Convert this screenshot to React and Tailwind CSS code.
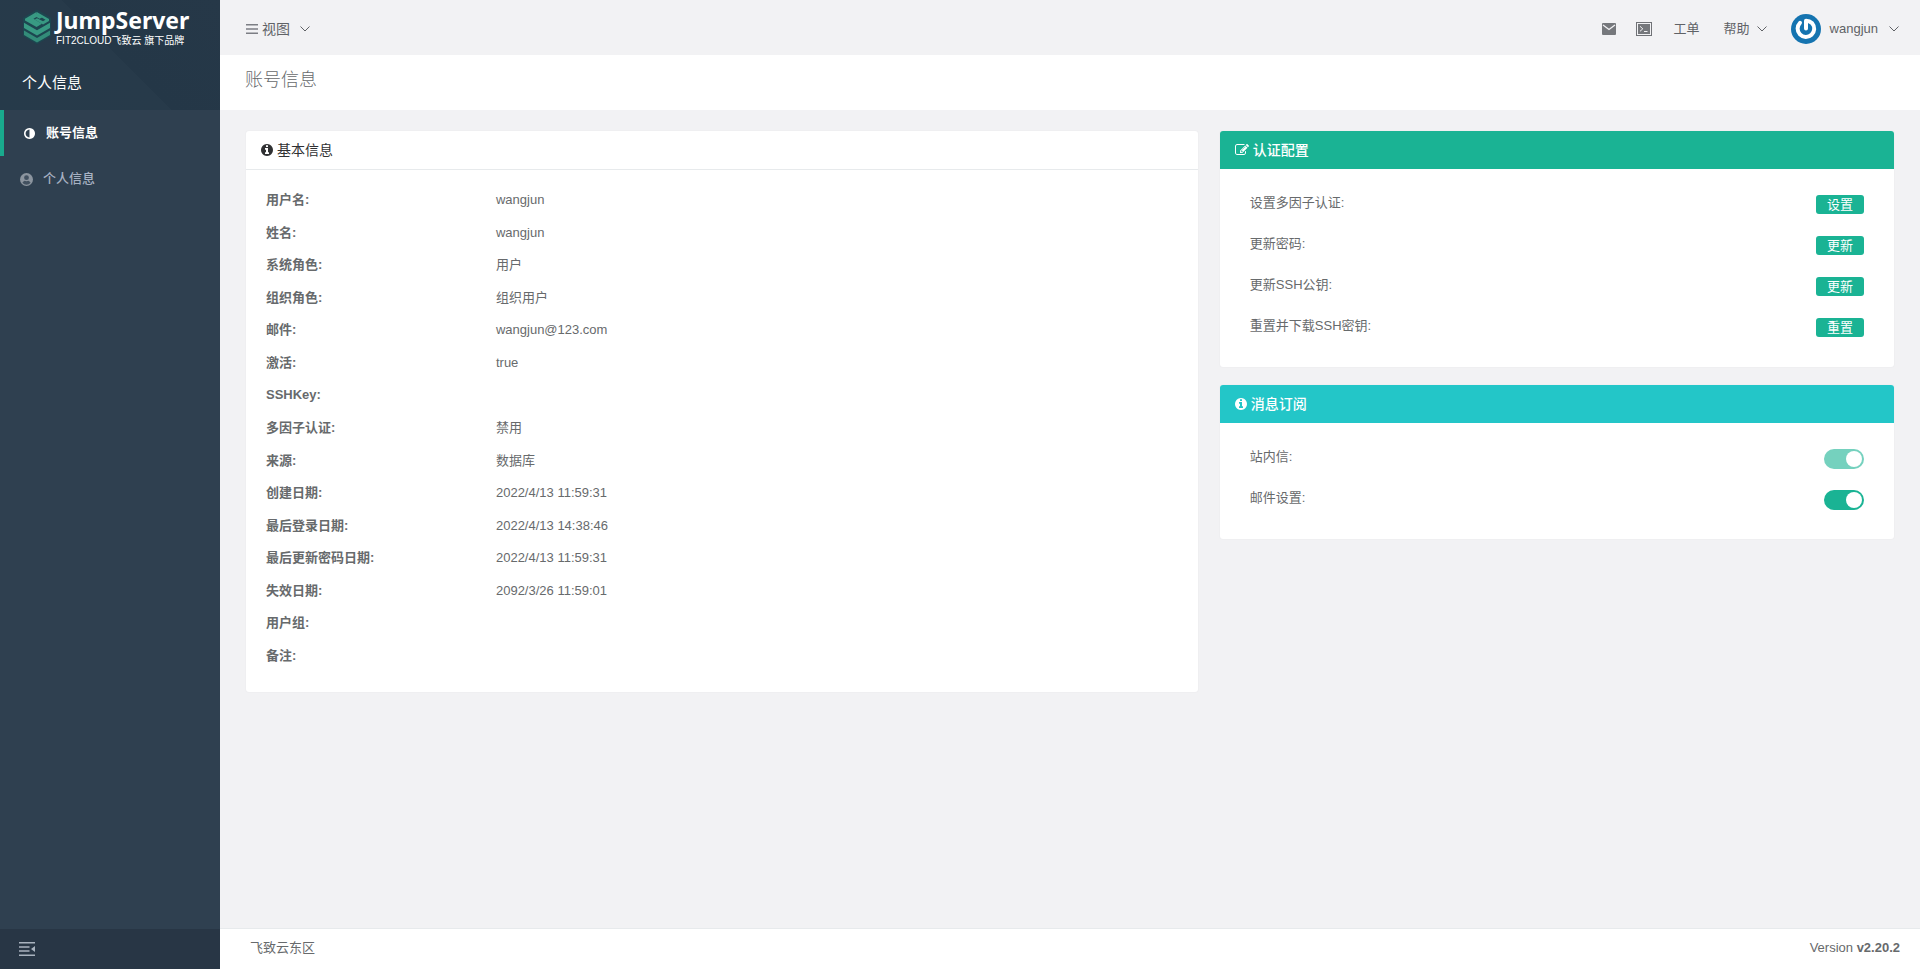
import React from "react";

const details = [
  ["用户名:", "wangjun"],
  ["姓名:", "wangjun"],
  ["系统角色:", "用户"],
  ["组织角色:", "组织用户"],
  ["邮件:", "wangjun@123.com"],
  ["激活:", "true"],
  ["SSHKey:", ""],
  ["多因子认证:", "禁用"],
  ["来源:", "数据库"],
  ["创建日期:", "2022/4/13 11:59:31"],
  ["最后登录日期:", "2022/4/13 14:38:46"],
  ["最后更新密码日期:", "2022/4/13 11:59:31"],
  ["失效日期:", "2092/3/26 11:59:01"],
  ["用户组:", ""],
  ["备注:", ""],
];

const authActions = [
  ["设置多因子认证:", "设置"],
  ["更新密码:", "更新"],
  ["更新SSH公钥:", "更新"],
  ["重置并下载SSH密钥:", "重置"],
];

const INFO =
  "M1152 1376v-160q0-14-9-23t-23-9h-96v-512q0-14-9-23t-23-9h-320q-14 0-23 9t-9 23v160q0 14 9 23t23 9h96v320h-96q-14 0-23 9t-9 23v160q0 14 9 23t23 9h448q14 0 23-9t9-23zm-128-896v-160q0-14-9-23t-23-9h-192q-14 0-23 9t-9 23v160q0 14 9 23t23 9h192q14 0 23-9t9-23zm640 416q0 209-103 385.5t-279.5 279.5-385.5 103-385.5-103-279.5-279.5-103-385.5 103-385.5 279.5-279.5 385.5-103 385.5 103 279.5 279.5 103 385.5z";
const ADJUST =
  "M896 1440v-1088q-148 0-273 73t-198 198-73 273 73 273 198 198 273 73zm768-544q0 209-103 385.5t-279.5 279.5-385.5 103-385.5-103-279.5-279.5-103-385.5 103-385.5 279.5-279.5 385.5-103 385.5 103 279.5 279.5 103 385.5z";
const EDIT =
  "M888 1184l116-116-152-152-116 116v56h96v96h56zm440-720q-16-16-33 1l-350 350q-17 17-1 33t33-1l350-350q17-17 1-33zm80 594v190q0 119-84.5 203.5t-203.5 84.5h-832q-119 0-203.5-84.5t-84.5-203.5v-832q0-119 84.5-203.5t203.5-84.5h832q63 0 117 25 15 7 18 23 3 17-9 29l-49 49q-14 14-32 8-23-6-45-6h-832q-66 0-113 47t-47 113v832q0 66 47 113t113 47h832q66 0 113-47t47-113v-126q0-13 9-22l64-64q15-15 35-7t20 29zm-96-738l288 288-672 672h-288v-288zm444 132l-92 92-288-288 92-92q28-28 68-28t68 28l152 152q28 28 28 68t-28 68z";

function Glyph({ d, viewBox = "128 128 1536 1536", className }) {
  return (
    <svg viewBox={viewBox} fill="currentColor" className={className} aria-hidden="true">
      <path d={d} />
    </svg>
  );
}

function Chevron() {
  return (
    <svg viewBox="0 0 10 6" fill="none" stroke="currentColor" className="h-[6px] w-[10px]" aria-hidden="true">
      <path d="M0.5 0.5 5 5 9.5 0.5" />
    </svg>
  );
}

function LogoMark() {
  return (
    <svg viewBox="0 0 30 36" className="h-9 w-[30px]" aria-hidden="true">
      <path d="M15 0.5 29 8.8V27L15 35.3 1 27V8.8Z" fill="#1d4650" />
      <path d="M14.5 3 3 9.8V11.5L14.5 18 20 14.8 11.5 9.8 14.5 8 17.5 9.8 20.5 8.2 14.8 4.8Z" fill="#389a83" />
      <path d="M14.8 3 27 10V12L21 15.4 12.8 10.4 15 9.2 21 12.2 23.5 10.8 14.8 5.6Z" fill="#389a83" />
      <path d="M2 13.8 15 21.3 28 13.8V19L15 26.5 2 19Z" fill="#389a83" />
      <path d="M2 21.6 15 29.1 28 21.6V26L15 33.5 2 26Z" fill="#338c79" />
    </svg>
  );
}

function Avatar() {
  return (
    <svg viewBox="0 0 30 30" className="size-[30px]" aria-hidden="true">
      <circle cx="15" cy="15" r="15" fill="#1574b0" />
      <path
        d="M9 8.8A8.3 8.3 0 1 0 21.2 9.2Q18.6 6.7 15 6.7V14.6"
        fill="none"
        stroke="#fff"
        strokeWidth="4"
        strokeLinecap="round"
        strokeLinejoin="round"
      />
    </svg>
  );
}

function Sidebar() {
  return (
    <aside className="flex w-[220px] shrink-0 flex-col bg-[#2f4050]">
      <div className="h-[110px] bg-[linear-gradient(45deg,#263a4a_0%,#273a4a_52%,#243747_52%,#263848_100%)] text-white">
        <a href="#home" className="flex h-[55px] items-start gap-1 pt-[9px] pl-[22px]">
          <LogoMark />
          <span className="flex flex-col gap-[2px]">
            <span className="font-['Noto_Sans'] text-[23px] leading-[22px] font-bold">JumpServer</span>
            <span className="text-[10px] leading-[16px] whitespace-nowrap">FIT2CLOUD飞致云 旗下品牌</span>
          </span>
        </a>
        <h2 className="flex h-[55px] items-center pl-[22px] text-[15px]">个人信息</h2>
      </div>
      <nav className="flex flex-col">
        <a href="#account" className="flex h-[46px] items-center gap-[11px] border-l-4 border-[#19aa8d] pl-5 font-bold text-white">
          <Glyph d={ADJUST} className="size-[11px]" />
          账号信息
        </a>
        <a href="#profile" className="flex h-[46px] items-center gap-[10px] pl-5 font-medium text-[#a7b1c2]">
          <svg viewBox="0 0 14 14" className="size-[13px]" aria-hidden="true">
            <circle cx="7" cy="7" r="7" fill="#8c959f" />
            <path d="M7 2.4A2.6 2.6 0 1 1 7 7.6 2.6 2.6 0 0 1 7 2.4ZM2.6 10.4Q3.6 8.8 5 8.4 7 9.4 9 8.4 10.4 8.8 11.4 10.4 9.6 12.6 7 12.6 4.4 12.6 2.6 10.4Z" fill="#2f4050" opacity="0.8" />
          </svg>
          个人信息
        </a>
      </nav>
      <div className="mt-auto flex h-10 items-center bg-[#283645] pl-[19px] text-[#a9b3bf]">
        <button type="button" aria-label="Collapse menu" className="cursor-pointer">
          <svg viewBox="0 0 16 14" fill="currentColor" className="block h-[14px] w-4" aria-hidden="true">
            <path d="M0 0H16V1.5H0ZM0 4.2H10.5V5.7H0ZM0 8.3H10.5V9.8H0ZM0 12.5H16V14H0ZM16 4V10L12 7Z" />
          </svg>
        </button>
      </div>
    </aside>
  );
}

function TopBar() {
  return (
    <header className="flex h-[55px] items-center justify-between pt-[2px] pr-[21px] pl-[26px] text-[#606266]">
      <button type="button" className="flex cursor-pointer items-center text-sm">
        <svg viewBox="0 0 12 10" fill="currentColor" className="mr-1 h-[10px] w-3 text-[#7c7e84]" aria-hidden="true">
          <path d="M0 0H12V1.6H0ZM0 4.2H12V5.8H0ZM0 8.4H12V10H0Z" />
        </svg>
        <span className="mr-[10px]">视图</span>
        <Chevron />
      </button>
      <div className="flex items-center">
        <button type="button" aria-label="Messages" className="mr-5 cursor-pointer">
          <svg viewBox="0 0 14 12" className="block h-3 w-[14px]" aria-hidden="true">
            <rect width="14" height="12" rx="1" fill="#76787c" />
            <path d="M1 2 7 6.4 13 2" fill="none" stroke="#f2f2f4" strokeWidth="1.3" />
          </svg>
        </button>
        <button type="button" aria-label="Web terminal" className="mr-[22px] cursor-pointer">
          <svg viewBox="0 0 16 14" className="block h-[14px] w-4" aria-hidden="true">
            <rect x="0.5" y="0.5" width="15" height="13" fill="#f2f2f4" stroke="#707276" />
            <rect x="2" y="2" width="12" height="10" fill="#76787c" />
            <path d="M4 4.3 6.8 6.8 4 9.3M8 9.5H11.5" fill="none" stroke="#f2f2f4" />
          </svg>
        </button>
        <a href="#tickets" className="mr-6">工单</a>
        <button type="button" className="mr-6 flex cursor-pointer items-center gap-[7px]">
          帮助
          <Chevron />
        </button>
        <button type="button" className="flex cursor-pointer items-center">
          <Avatar />
          <span className="mr-[11px] ml-[9px]">wangjun</span>
          <Chevron />
        </button>
      </div>
    </header>
  );
}

function Card({ title, icon, headClass, children }) {
  return (
    <section className="overflow-hidden rounded-[3px] bg-white shadow-[0_0_2px_rgba(0,0,0,0.06)]">
      <h3 className={`flex items-center pl-[15px] text-sm ${headClass}`}>
        {icon}
        {title}
      </h3>
      {children}
    </section>
  );
}

function Switch({ id, disabled }) {
  return (
    <input
      id={id}
      type="checkbox"
      role="switch"
      defaultChecked
      disabled={disabled}
      className="flex h-5 w-10 cursor-pointer appearance-none items-center justify-start rounded-full bg-[#dcdfe6] px-[2px] before:size-4 before:rounded-full before:bg-white checked:justify-end checked:bg-[#1ab394] disabled:cursor-not-allowed disabled:opacity-60"
    />
  );
}

export default function App() {
  return (
    <div className="flex min-h-screen bg-[#f2f2f4] font-['Liberation_Sans','Noto_Sans_CJK_SC',sans-serif] text-[13px] leading-5 text-[#676a6c]">
      <Sidebar />
      <div className="flex min-w-0 grow flex-col">
        <TopBar />
        <div className="flex h-[55px] items-center bg-white pb-[5px] pl-[25px]">
          <h1 className="text-lg font-light">账号信息</h1>
        </div>
        <main className="grid grow grid-cols-[24fr_17fr] items-start gap-[22px] px-[26px] pt-[21px] pb-6">
          <Card
            title="基本信息"
            headClass="h-[39px] border-b border-[#e7eaec] text-[#303133]"
            icon={<Glyph d={INFO} className="mr-1 size-3" />}
          >
            <dl className="grid min-h-[522px] auto-rows-fr px-5 pt-[14px] pb-5">
              {details.map(([label, value]) => (
                <div key={label} className="grid grid-cols-4 items-center gap-x-2">
                  <dt className="font-bold">{label}</dt>
                  <dd className="col-span-3">{value}</dd>
                </div>
              ))}
            </dl>
          </Card>
          <div className="flex flex-col gap-[18px]">
            <Card
              title="认证配置"
              headClass="h-[38px] bg-[#1ab394] font-medium text-white"
              icon={<Glyph d={EDIT} viewBox="0 128 1792 1536" className="mr-1 h-3 w-[14px]" />}
            >
              <ul className="px-[30px] pt-[15px] pb-[19px]">
                {authActions.map(([label, action]) => (
                  <li key={label} className="flex h-[41px] items-center justify-between">
                    <span className="pb-1">{label}</span>
                    <button type="button" className="h-[19px] w-12 cursor-pointer rounded-[3px] bg-[#1ab394] leading-[19px] text-white">
                      {action}
                    </button>
                  </li>
                ))}
              </ul>
            </Card>
            <Card
              title="消息订阅"
              headClass="h-[38px] bg-[#23c6c8] font-medium text-white"
              icon={<Glyph d={INFO} className="mr-1 size-3" />}
            >
              <div className="px-[30px] pt-[15px] pb-[19px]">
                <div className="flex h-[41px] items-center justify-between">
                  <label htmlFor="site-msg" className="pb-1">站内信:</label>
                  <Switch id="site-msg" disabled />
                </div>
                <div className="flex h-[41px] items-center justify-between">
                  <label htmlFor="mail-msg" className="pb-1">邮件设置:</label>
                  <Switch id="mail-msg" />
                </div>
              </div>
            </Card>
          </div>
        </main>
        <footer className="flex h-[41px] items-center justify-between border-t border-[#e7eaec] bg-white pr-5 pb-[2px] pl-[30px]">
          <span>飞致云东区</span>
          <span>
            Version <b>v2.20.2</b>
          </span>
        </footer>
      </div>
    </div>
  );
}
